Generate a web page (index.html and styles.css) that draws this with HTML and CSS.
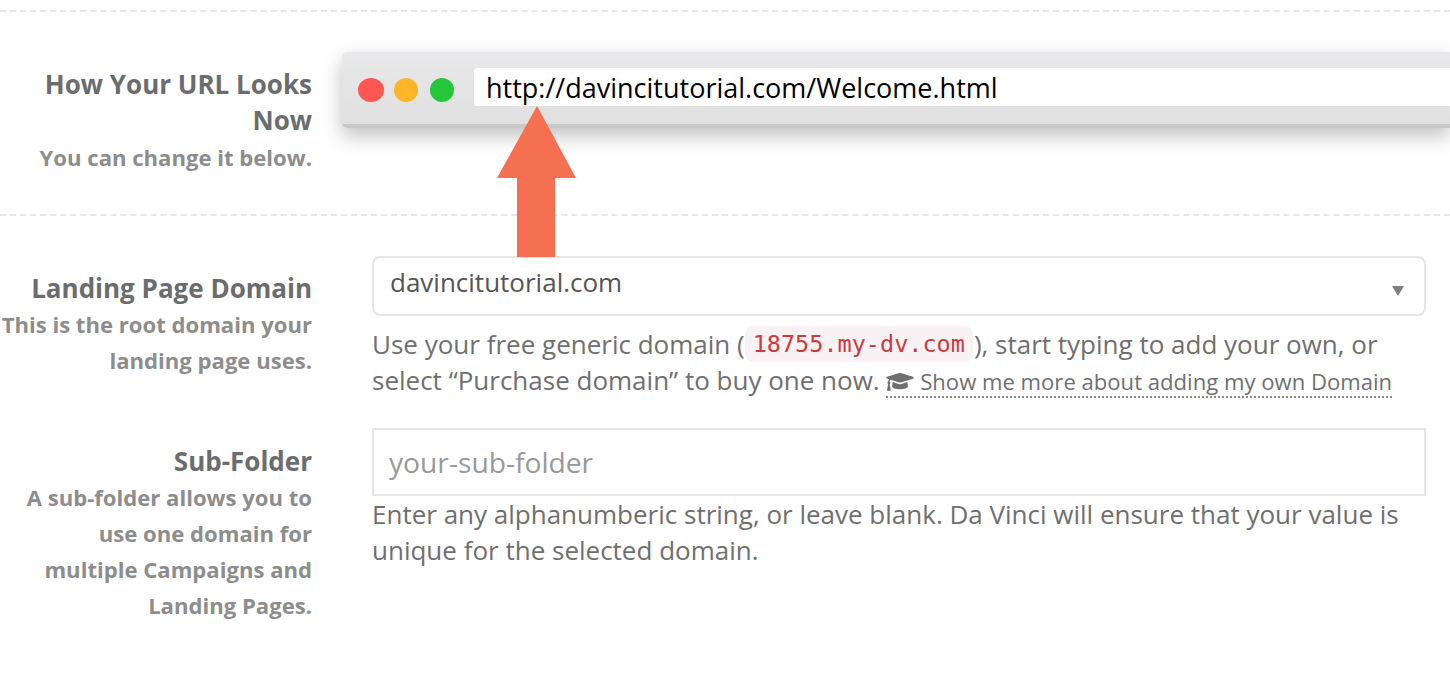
FILE: index.html

```html
<!DOCTYPE html>
<html lang="en">
<head>
    <meta charset="UTF-8">
    <meta name="viewport" content="width=device-width, initial-scale=1.0">
    <title>Landing Page URL</title>
    <link rel="stylesheet" href="styles.css">
</head>
<body>
    <main class="page">
        <section class="row row-preview">
            <div class="label-col">
                <h3>How Your URL Looks Now</h3>
                <p>You can change it below.</p>
            </div>
            <div class="browser-bar">
                <span class="dot dot-red"></span>
                <span class="dot dot-yellow"></span>
                <span class="dot dot-green"></span>
                <div class="url-box">http://davincitutorial.com/Welcome.html</div>
            </div>
        </section>

        <section class="row row-domain">
            <div class="label-col">
                <h3>Landing Page Domain</h3>
                <p>This is the root domain your landing page uses.</p>
            </div>
            <div class="field-col">
                <div class="select-box">
                    <span>davincitutorial.com</span>
                    <span class="caret"></span>
                </div>
                <p class="help">Use your free generic domain (<code>18755.my-dv.com</code>), start typing to add your own, or select “Purchase domain” to buy one now.
                    <a class="more-link" href="#"><svg class="cap-icon" viewBox="0 0 640 512" aria-hidden="true"><path d="M623 136 338 48a64 64 0 0 0-36 0L17 136c-23 7-23 33 0 40l50 15c-11 14-18 31-19 50-12 7-20 19-20 33 0 13 6 24 16 32L18 442c-2 10 6 20 16 20h56c10 0 18-10 16-20L80 306c10-8 16-19 16-32 0-13-7-25-18-32 1-15 10-29 23-37l201 62c19 6 39 3 36 0l285-88c23-7 23-33 0-40zM347 302c-29 9-53 4-54 0l-145-45-13 103c0 35 83 64 185 64s185-29 185-64l-13-103z"/></svg> <span class="more-text">Show me more about adding my own Domain</span></a>
                </p>
            </div>
        </section>

        <section class="row row-folder">
            <div class="label-col">
                <h3>Sub-Folder</h3>
                <p>A sub-folder allows you to use one domain for<br>multiple Campaigns and Landing Pages.</p>
            </div>
            <div class="field-col">
                <input class="text-input" type="text" placeholder="your-sub-folder">
                <p class="help">Enter any alphanumberic string, or leave blank. Da Vinci will ensure that your value is unique for the selected domain.</p>
            </div>
        </section>

        <svg class="arrow" viewBox="0 0 80 151" aria-hidden="true"><path d="M40 0 79 72H58V151H20V72H0Z"/></svg>
    </main>
</body>
</html>
```

FILE: styles.css

```css
html, body {
    margin: 0;
    padding: 0;
    height: 100%;
    overflow: hidden;
}

body {
    font-family: "Open Sans", sans-serif;
    background-color: #fff;
    color: #6f6f6f;
}

.page {
    position: relative;
    padding-top: 10px;
}

.row {
    display: flex;
    align-items: flex-start;
}

.row-preview {
    height: 206px;
    box-sizing: border-box;
    padding-top: 40px;
    border-top: 2px dashed #e6e8e8;
    border-bottom: 2px dashed #e6e8e8;
}

.row-domain {
    padding-top: 40px;
}

.row-folder {
    padding-top: 29px;
}

.label-col {
    flex: 0 0 312px;
    padding-top: 14px;
    text-align: right;
}

.label-col h3 {
    margin: 0;
    font-size: 26px;
    line-height: 36px;
    font-weight: 700;
    color: #6a6c6e;
}

.label-col p {
    margin: 0;
    font-size: 22.1px;
    line-height: 36px;
    font-weight: 700;
    color: #8d8d8d;
}

.row-preview .label-col h3 {
    padding-left: 20px;
}

.row-preview .label-col p {
    margin-top: 1px;
}

.row-folder .label-col {
    padding-top: 15px;
}

/* browser chrome */
.browser-bar {
    display: flex;
    flex: 1;
    align-items: center;
    box-sizing: border-box;
    height: 76px;
    margin-left: 30px;
    padding: 16px 0 18px 16px;
    border-radius: 5px 0 0 5px;
    background: linear-gradient(#e9e8ea, #dfe0df);
    border-bottom: 4px solid #c8c8c8;
    box-shadow: 0 8px 20px rgba(0, 0, 0, 0.25);
}

.dot {
    width: 24px;
    height: 24px;
    margin-top: 6px;
    margin-right: 12px;
    border-radius: 50%;
}

.dot-red {
    width: 26px;
    margin-right: 10px;
    background-color: #fe5652;
}

.dot-yellow { background-color: #feb527; }
.dot-green { background-color: #25c73a; }

.url-box {
    flex: 1;
    margin-left: 8px;
    height: 38px;
    padding-left: 12px;
    background-color: #fff;
    border-radius: 3px 0 0 3px;
    color: #000;
    font-size: 27px;
    line-height: 40px;
}

/* form fields */
.field-col {
    flex: 0 0 1054px;
    margin-left: 60px;
}

.select-box {
    display: flex;
    justify-content: space-between;
    align-items: center;
    box-sizing: border-box;
    height: 60px;
    padding: 0 20px 9px 16px;
    border: 2px solid #e5e5e5;
    border-radius: 8px;
    color: #555;
    font-size: 26px;
}

.caret {
    width: 0;
    height: 0;
    margin-top: 19px;
    border-left: 6.5px solid transparent;
    border-right: 6.5px solid transparent;
    border-top: 10px solid #808080;
}

.help {
    margin: 10px 0 0;
    font-size: 26px;
    line-height: 36px;
}

code {
    display: inline-block;
    margin: 0 1px 0 0;
    padding: 0 8px;
    height: 36px;
    line-height: 36px;
    border-radius: 8px;
    background-color: #f9f2f4;
    color: #d0393c;
    font-family: "DejaVu Sans Mono", monospace;
    font-size: 23.5px;
    vertical-align: top;
}

.more-link {
    color: #6f6f6f;
    font-size: 22.1px;
    text-decoration: none;
    border-bottom: 2px dotted #888;
}

.cap-icon {
    width: 28px;
    height: 22px;
    fill: #6f6f6f;
    vertical-align: -3px;
}

.text-input {
    display: block;
    box-sizing: border-box;
    width: 100%;
    height: 68px;
    padding: 0 15px;
    border: 2px solid #e5e5e5;
    font-family: "Open Sans", sans-serif;
    font-size: 28.2px;
    color: #555;
    outline: none;
}

.text-input::placeholder {
    color: #999;
    opacity: 1;
}

.row-folder .help {
    margin-top: 0;
}

/* annotation on top of the screenshot */
.arrow {
    position: absolute;
    left: 497px;
    top: 106px;
    width: 80px;
    height: 151px;
    fill: #f56f51;
}
```
